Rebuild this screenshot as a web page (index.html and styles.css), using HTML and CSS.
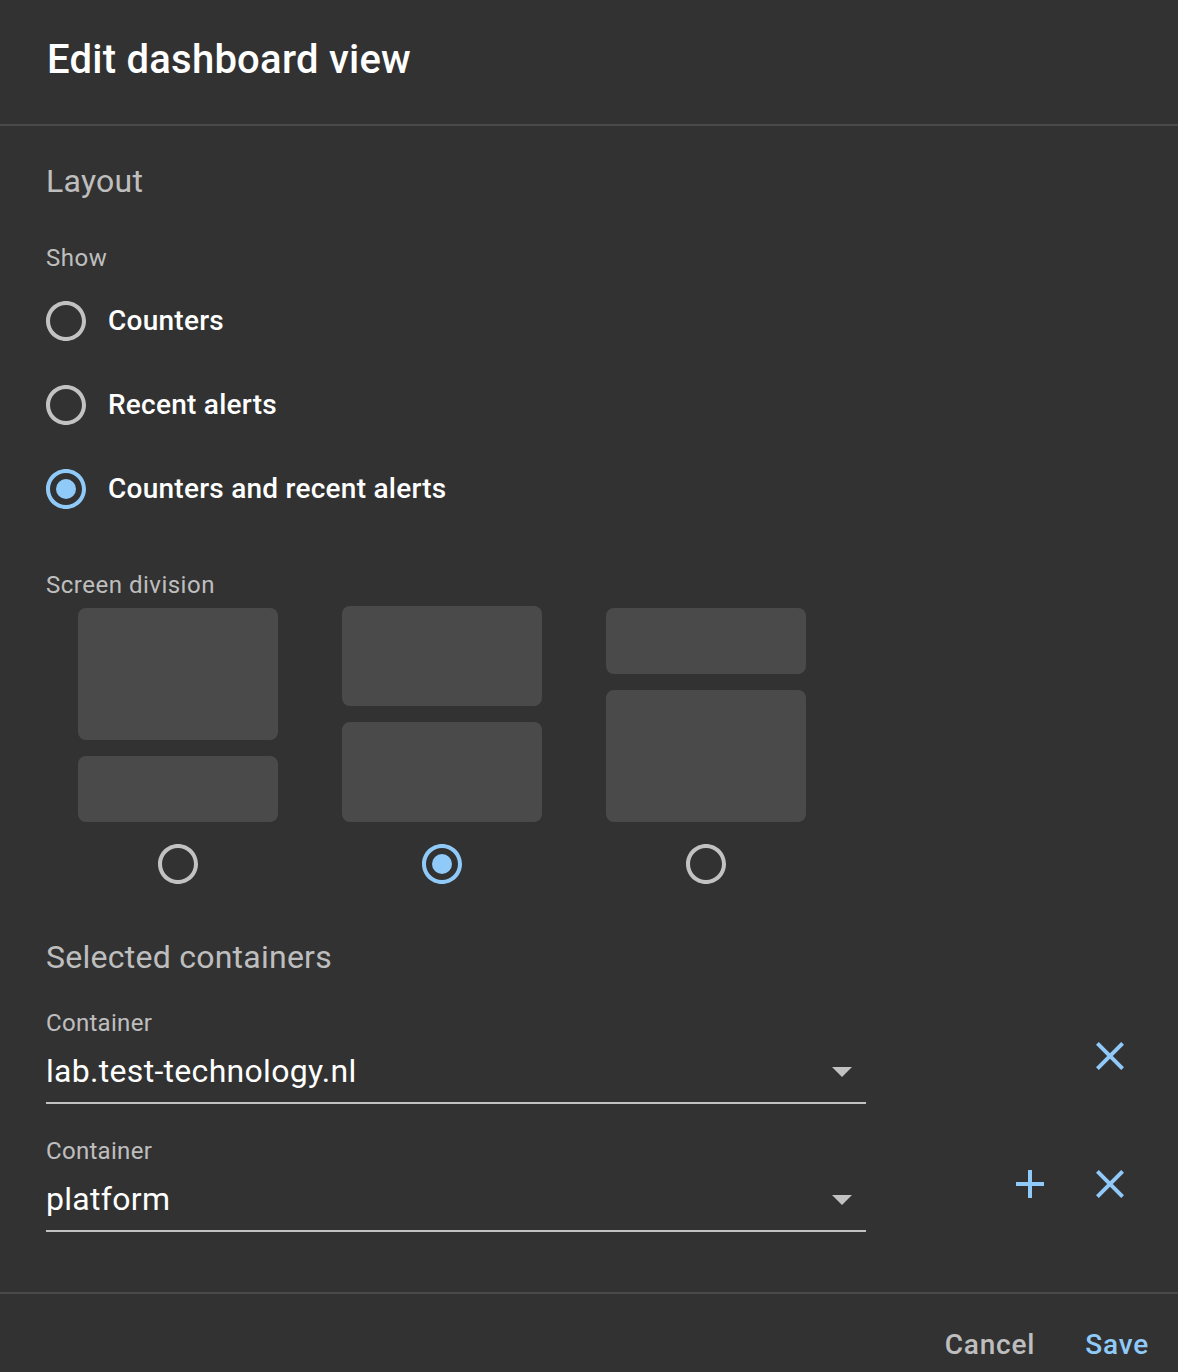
FILE: index.html
```html
<!DOCTYPE html>
<html lang="en">
<head>
<meta charset="utf-8">
<title>Edit dashboard view</title>
<link rel="stylesheet" href="styles.css">
</head>
<body>
<div class="dialog">
  <header class="dialog-header">
    <h1 class="dialog-title">Edit dashboard view</h1>
  </header>
  <main class="dialog-content">
    <h2 class="section-title">Layout</h2>
    <div class="form-label">Show</div>
    <div class="radio-group">
      <label class="radio-row">
        <svg class="radio-icon" viewBox="0 0 24 24"><path d="M12 2C6.48 2 2 6.48 2 12s4.48 10 10 10 10-4.48 10-10S17.52 2 12 2zm0 18c-4.42 0-8-3.58-8-8s3.58-8 8-8 8 3.58 8 8-3.58 8-8 8z"/></svg>
        <span class="radio-label">Counters</span>
      </label>
      <label class="radio-row">
        <svg class="radio-icon" viewBox="0 0 24 24"><path d="M12 2C6.48 2 2 6.48 2 12s4.48 10 10 10 10-4.48 10-10S17.52 2 12 2zm0 18c-4.42 0-8-3.58-8-8s3.58-8 8-8 8 3.58 8 8-3.58 8-8 8z"/></svg>
        <span class="radio-label">Recent alerts</span>
      </label>
      <label class="radio-row">
        <svg class="radio-icon checked" viewBox="0 0 24 24"><path d="M12 2C6.48 2 2 6.48 2 12s4.48 10 10 10 10-4.48 10-10S17.52 2 12 2zm0 18c-4.42 0-8-3.58-8-8s3.58-8 8-8 8 3.58 8 8-3.58 8-8 8z"/><circle cx="12" cy="12" r="5"/></svg>
        <span class="radio-label">Counters and recent alerts</span>
      </label>
    </div>

    <div class="form-label division-label">Screen division</div>
    <div class="division-grid">
      <div class="division-option">
        <div class="division-preview">
          <div class="pane pane-large"></div>
          <div class="pane pane-small"></div>
        </div>
        <svg class="radio-icon" viewBox="0 0 24 24"><path d="M12 2C6.48 2 2 6.48 2 12s4.48 10 10 10 10-4.48 10-10S17.52 2 12 2zm0 18c-4.42 0-8-3.58-8-8s3.58-8 8-8 8 3.58 8 8-3.58 8-8 8z"/></svg>
      </div>
      <div class="division-option">
        <div class="division-preview">
          <div class="pane pane-half"></div>
          <div class="pane pane-half"></div>
        </div>
        <svg class="radio-icon checked" viewBox="0 0 24 24"><path d="M12 2C6.48 2 2 6.48 2 12s4.48 10 10 10 10-4.48 10-10S17.52 2 12 2zm0 18c-4.42 0-8-3.58-8-8s3.58-8 8-8 8 3.58 8 8-3.58 8-8 8z"/><circle cx="12" cy="12" r="5"/></svg>
      </div>
      <div class="division-option">
        <div class="division-preview">
          <div class="pane pane-small"></div>
          <div class="pane pane-large"></div>
        </div>
        <svg class="radio-icon" viewBox="0 0 24 24"><path d="M12 2C6.48 2 2 6.48 2 12s4.48 10 10 10 10-4.48 10-10S17.52 2 12 2zm0 18c-4.42 0-8-3.58-8-8s3.58-8 8-8 8 3.58 8 8-3.58 8-8 8z"/></svg>
      </div>
    </div>

    <h2 class="section-title containers-title">Selected containers</h2>
    <div class="container-rows">
      <div class="container-row">
        <div class="select-field">
          <div class="select-label">Container</div>
          <div class="select-input">
            <span class="select-value">lab.test-technology.nl</span>
            <svg class="select-arrow" viewBox="0 0 20 10"><path d="M0 0h20L10 10z"/></svg>
          </div>
        </div>
        <div class="row-actions">
          <svg class="action-icon" viewBox="0 0 24 24"><path d="M19 6.41L17.59 5 12 10.59 6.41 5 5 6.41 10.59 12 5 17.59 6.41 19 12 13.41 17.59 19 19 17.59 13.41 12z"/></svg>
        </div>
      </div>
      <div class="container-row">
        <div class="select-field">
          <div class="select-label">Container</div>
          <div class="select-input">
            <span class="select-value">platform</span>
            <svg class="select-arrow" viewBox="0 0 20 10"><path d="M0 0h20L10 10z"/></svg>
          </div>
        </div>
        <div class="row-actions">
          <svg class="action-icon" viewBox="0 0 24 24"><path d="M19 13h-6v6h-2v-6H5v-2h6V5h2v6h6v2z"/></svg>
          <svg class="action-icon" viewBox="0 0 24 24"><path d="M19 6.41L17.59 5 12 10.59 6.41 5 5 6.41 10.59 12 5 17.59 6.41 19 12 13.41 17.59 19 19 17.59 13.41 12z"/></svg>
        </div>
      </div>
    </div>
  </main>
  <footer class="dialog-actions">
    <button class="btn btn-cancel" type="button">Cancel</button>
    <button class="btn btn-save" type="button">Save</button>
  </footer>
</div>
</body>
</html>
```

FILE: styles.css
```css
* {
  box-sizing: border-box;
}

html, body {
  margin: 0;
  padding: 0;
  background: #323232;
}

body {
  font-family: Roboto, "Noto Sans", "Liberation Sans", sans-serif;
  color: #fff;
}

.dialog {
  width: 1178px;
  height: 1372px;
  overflow: hidden;
  background: #323232;
}

.dialog-header {
  height: 126px;
  padding: 36px 47px 0;
  border-bottom: 2px solid #4a4a4a;
}

.dialog-title {
  margin: 0;
  font-size: 40px;
  line-height: 48px;
  font-weight: 500;
  color: #fff;
  letter-spacing: 0.25px;
}

.dialog-content {
  display: flow-root;
  padding: 0 44px 0 46px;
  height: 1166px;
}

.section-title {
  margin: 35px 0 0;
  font-size: 32px;
  line-height: 40px;
  font-weight: 400;
  color: rgba(255, 255, 255, 0.7);
  letter-spacing: 0.25px;
}

.form-label {
  margin-top: 41px;
  font-size: 24px;
  line-height: 32px;
  color: rgba(255, 255, 255, 0.7);
  letter-spacing: 0.5px;
}

.radio-group {
  margin-top: 5px;
  display: flex;
  flex-direction: column;
}

.radio-row {
  height: 84px;
  display: flex;
  align-items: center;
  gap: 18px;
  margin-left: -4px;
}

.radio-icon {
  width: 48px;
  height: 48px;
  flex: none;
  fill: rgba(255, 255, 255, 0.7);
}

.radio-icon.checked {
  fill: #90caf9;
}

.radio-label {
  font-size: 28px;
  line-height: 32px;
  font-weight: 500;
  color: #fff;
  letter-spacing: 0.25px;
}

.division-label {
  margin-top: 38px;
}

.division-grid {
  margin-top: 5px;
  padding-left: 32px;
  display: flex;
  gap: 64px;
}

.division-option {
  width: 200px;
  display: flex;
  flex-direction: column;
  align-items: center;
  gap: 18px;
}

.division-preview {
  width: 200px;
  height: 216px;
  display: flex;
  flex-direction: column;
  justify-content: flex-end;
  gap: 16px;
}

.pane {
  background: #4a4a4a;
  border-radius: 8px;
}

.pane-large {
  height: 132px;
}

.pane-small {
  height: 66px;
}

.pane-half {
  height: 100px;
}

.containers-title {
  margin-top: 49px;
}

.container-rows {
  margin-top: 30px;
  display: flex;
  flex-direction: column;
  gap: 31px;
}

.container-row {
  display: flex;
  align-items: center;
}

.select-field {
  width: 820px;
  flex: none;
}

.select-label {
  font-size: 24px;
  line-height: 32px;
  color: rgba(255, 255, 255, 0.7);
  letter-spacing: 0.3px;
}

.select-input {
  margin-top: 12px;
  padding-bottom: 11px;
  border-bottom: 2px solid rgba(255, 255, 255, 0.7);
  display: flex;
  align-items: center;
  justify-content: space-between;
}

.select-value {
  font-size: 32px;
  line-height: 40px;
  color: #fff;
  letter-spacing: 0.3px;
}

.select-arrow {
  width: 20px;
  height: 10px;
  margin-right: 14px;
  margin-top: 2px;
  fill: rgba(255, 255, 255, 0.7);
}

.row-actions {
  flex: 1;
  display: flex;
  justify-content: flex-end;
  gap: 32px;
}

.action-icon {
  width: 48px;
  height: 48px;
  fill: #90caf9;
}

.dialog-actions {
  border-top: 2px solid #4a4a4a;
  padding: 33px 13px 0 0;
  display: flex;
  justify-content: flex-end;
  gap: 18px;
}

.btn {
  background: none;
  border: none;
  padding: 0 16px;
  margin: 0;
  font-family: Roboto, "Noto Sans", "Liberation Sans", sans-serif;
  font-size: 28px;
  line-height: 36px;
  font-weight: 500;
  letter-spacing: 0.8px;
  cursor: pointer;
}

.btn-cancel {
  color: rgba(255, 255, 255, 0.7);
}

.btn-save {
  color: #90caf9;
}
```
